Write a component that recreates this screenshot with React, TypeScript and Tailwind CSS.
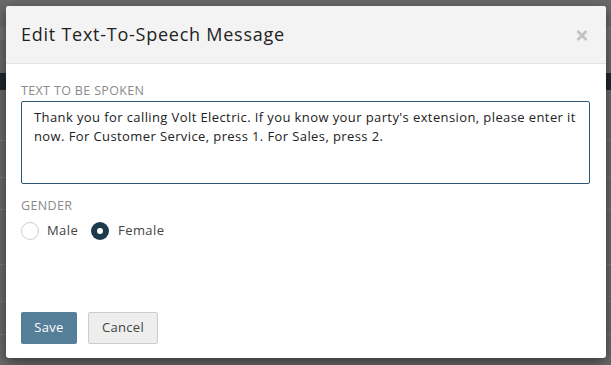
import { useState } from 'react';

// Modal dialog for editing a text-to-speech prompt, shown over a dimmed page.
export default function App() {
  const [gender, setGender] = useState<'male' | 'female'>('female');
  const [text, setText] = useState(
    "Thank you for calling Volt Electric. If you know your party's extension, please enter it now. For Customer Service, press 1. For Sales, press 2."
  );

  const radio = (on: boolean) =>
    on
      ? 'w-[18px] h-[18px] rounded-full bg-[#1d3a4d] flex items-center justify-center'
      : 'w-[18px] h-[18px] rounded-full border border-[#cfcfcf] bg-white';

  return (
    <div
      className="relative w-[611px] h-[365px] bg-[#6b6b6b] overflow-hidden"
      style={{ fontFamily: '"Open Sans", "Liberation Sans", sans-serif' }}
    >
      {/* faint page behind the overlay */}
      <div className="absolute inset-0 flex flex-col">
        <div className="h-[26px]" />
        <div className="h-[14px] bg-[#747474]" />
        <div className="h-[33px]" />
        <div className="h-[17px] bg-[#1f2a31]" />
        <div className="h-[51px] border-b border-[#7a7a7a]" />
        <div className="h-[37px] border-b border-[#7a7a7a]" />
        <div className="h-[32px] border-b border-[#7a7a7a]" />
        <div className="h-[55px] border-b border-[#7a7a7a]" />
        <div className="h-[37px] border-b border-[#7a7a7a]" />
        <div className="h-[33px] border-b border-[#7a7a7a]" />
      </div>

      <div className="absolute left-[6px] top-[6px] w-[600px] h-[352px] bg-white rounded-[3px] shadow-[0_4px_14px_rgba(0,0,0,0.5)] flex flex-col">
        <div className="h-[58px] bg-[#f3f3f3] border-b border-[#e3e3e3] rounded-t-[3px] flex items-center justify-between pl-[15px] pr-[18px]">
          <h1 className="text-[18px] text-[#222] tracking-[0.75px]">Edit Text-To-Speech Message</h1>
          <button title="Close" className="mt-[2px]">
            <svg width="12" height="11" viewBox="0 0 12 11">
              <path d="M1.5 1 L10.5 10 M10.5 1 L1.5 10" stroke="#c2c2c2" strokeWidth="2.6" strokeLinecap="butt" />
            </svg>
          </button>
        </div>

        <div className="flex-1 px-[15px] pt-[20px] flex flex-col">
          <label className="block">
            <span className="block text-[12.5px] text-[#8a8a8a] uppercase leading-[14px] tracking-[0.35px]">
              Text to be spoken
            </span>
            <textarea
              value={text}
              onChange={(e) => setText(e.target.value)}
              className="mt-[3px] block w-[569px] h-[83px] border border-[#2e5873] rounded-[2px] px-[12px] py-[6px] text-[13px] leading-[19px] text-[#222] tracking-[0.4px] resize-none outline-none"
            />
          </label>

          <div className="mt-[15px]">
            <span className="block text-[12.5px] text-[#8a8a8a] uppercase leading-[14px] tracking-[0.35px]">Gender</span>
            <div className="mt-[8px] flex items-center text-[13px] text-[#444] tracking-[0.4px]">
              <button onClick={() => setGender('male')} className="flex items-center gap-[8px]">
                <span className={radio(gender === 'male')}>
                  {gender === 'male' && <span className="w-[6px] h-[6px] rounded-full bg-white" />}
                </span>
                Male
              </button>
              <button onClick={() => setGender('female')} className="ml-[13px] flex items-center gap-[9px]">
                <span className={radio(gender === 'female')}>
                  {gender === 'female' && <span className="w-[6px] h-[6px] rounded-full bg-white" />}
                </span>
                Female
              </button>
            </div>
          </div>

          <div className="mt-auto mb-[14px] flex gap-[11px] tracking-[0.3px]">
            <button className="w-[56px] h-[32px] bg-[#557e98] text-white text-[13px] rounded-[2px]">Save</button>
            <button className="w-[70px] h-[32px] bg-[#eeeeee] border border-[#cccccc] text-[#444] text-[13px] rounded-[2px]">
              Cancel
            </button>
          </div>
        </div>
      </div>
    </div>
  );
}
